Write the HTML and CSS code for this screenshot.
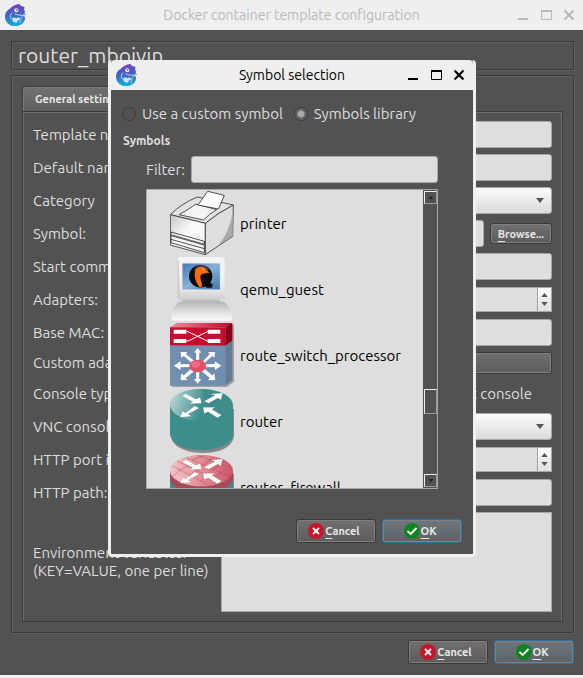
FILE: index.html
```html
<!DOCTYPE html>
<html lang="en">
<head>
<meta charset="utf-8">
<title>Docker container template configuration</title>
<link rel="stylesheet" href="styles.css">
</head>
<body>
<svg class="defs" aria-hidden="true">
  <defs>
    <linearGradient id="g-logo" x1="0" y1="0" x2="0" y2="1"><stop offset="0" stop-color="#7b3fbb"/><stop offset=".5" stop-color="#3f66bd"/><stop offset="1" stop-color="#12b0da"/></linearGradient>
    <linearGradient id="g-front" x1="0" y1="0" x2="1" y2="1"><stop offset="0" stop-color="#c6c6c6"/><stop offset=".45" stop-color="#fafafa"/><stop offset="1" stop-color="#eee"/></linearGradient>
    <linearGradient id="g-mon" x1="0" y1="0" x2="0" y2="1"><stop offset="0" stop-color="#f4f4f4"/><stop offset=".6" stop-color="#f0f0f0"/><stop offset="1" stop-color="#cfcfcf"/></linearGradient>
    <linearGradient id="g-base" x1="0" y1="0" x2="0" y2="1"><stop offset="0" stop-color="#b4b4b4"/><stop offset=".7" stop-color="#eaeaea"/><stop offset="1" stop-color="#f6f6f6"/></linearGradient>
    <linearGradient id="g-screen" x1="0" y1="0" x2="1" y2="1"><stop offset="0" stop-color="#3f77b0"/><stop offset=".5" stop-color="#87b0d8"/><stop offset="1" stop-color="#3c73ab"/></linearGradient>
    <linearGradient id="g-red" x1="0" y1="0" x2="1" y2="0"><stop offset="0" stop-color="#f08a9c"/><stop offset="1" stop-color="#b40a2a"/></linearGradient>
    <linearGradient id="g-teal" x1="0" y1="0" x2=".9" y2=".3"><stop offset="0" stop-color="#c4dedd"/><stop offset="1" stop-color="#3c8d8c"/></linearGradient>
    <linearGradient id="g-brick" x1="0" y1="0" x2="1" y2="0"><stop offset="0" stop-color="#f6c3c9"/><stop offset="1" stop-color="#cf5564"/></linearGradient>
    <symbol id="logo" viewBox="0 0 63 66">
      <path fill="url(#g-logo)" d="M23 7C29 3 36 0 43 0C45 5 52 8 59 9C56 14 58 19 60 24L58 29L63 30V33L50 35L60 38C62 52 51 66 30 66C12 66 0 54 0 38C0 27 5 20 12 16C17 13 18 10 23 7Z"/>
      <circle cx="34" cy="19" r="6" fill="#efefef"/><circle cx="35" cy="18" r="2.500" fill="#54309a"/>
      <path fill="none" stroke="#dfe9f6" stroke-width="2.500" d="M62 32C50 35 36 34 29 29M22 26C13 33 15 43 22 47"/>
      <path fill="#c5e5f3" d="M22 46C21 38 30 41 34 43C41 38 48 42 45 47C36 47 39 55 34 56C26 57 21 52 22 46Z"/>
      <path fill="none" stroke="#c5e5f3" stroke-width="2.500" d="M51 38C49 45 44 50 45 57"/>
    </symbol>
    <symbol id="arrows" viewBox="0 0 192 100">
      <g fill="#fff" stroke="#333" stroke-opacity=".35" stroke-width="1">
        <path d="M36 21L48 14L78 31L90 25L95 43L58 44L68 38Z"/>
        <path d="M102 37L135 19L120 15L158 12L153 33L144 27L116 43Z"/>
        <path d="M74 51L88 57L54 76L66 82L30 85L38 66L46 72Z"/>
        <path d="M155 79L142 86L114 68L103 74L99 55L137 55L126 61Z"/>
      </g>
    </symbol>
    <symbol id="printer" viewBox="0 0 192 192">
      <g stroke="#333" stroke-width="2.5" stroke-linejoin="round">
        <path fill="#e2e2e2" d="M1 71Q35 37 82 18L190 42Q145 65 106 97Z"/>
        <path fill="url(#g-front)" d="M1 71L106 97V191L1 162Z"/>
        <path fill="#dedede" d="M106 97Q145 65 190 42L188 136L106 191Z"/>
        <path fill="#f4f4f4" d="M27 71Q58 54 78 39L140 56Q115 70 101 87Z"/>
        <path fill="#fff" d="M113 1L163 13L145 54L84 42Z"/>
        <path fill="none" d="M3 123L103 151V160M3 133L103 161M3 145L103 173M3 123V155L103 185V151"/>
      </g>
      <path fill="#aaa" d="M188 62V134L145 163Q180 120 188 62Z"/>
      <path fill="none" stroke="#666" stroke-width="5" d="M8 134L103 161"/>
    </symbol>
    <symbol id="qemu" viewBox="0 0 192 192">
      <path fill="#bdbdbd" d="M36 120H150V140H36Z"/>
      <rect x="22" y="0" width="142" height="128" rx="9" fill="url(#g-mon)"/>
      <path fill="#ccc" d="M22 9H26L29 118L40 127H28Q22 125 22 117Z"/>
      <rect x="36" y="18" width="115" height="81" fill="url(#g-screen)" stroke="#eee" stroke-width="3"/>
      <ellipse cx="92" cy="58" rx="35" ry="34" fill="#080b0c"/><path fill="#080b0c" d="M98 70L128 81L126 92H109Z"/>
      <ellipse cx="94" cy="39" rx="22" ry="14" fill="#777" opacity=".55"/>
      <path fill="#ff6d0b" d="M86 88Q76 74 74 58Q72 36 89 30Q104 27 110 41L119 47L104 48Q91 50 91 60Q91 70 96 78L95 91Q89 92 86 88Z"/><circle cx="99" cy="37" r="2" fill="#fff"/>
      <path fill="url(#g-base)" d="M26 134H162Q179 145 187 177Q190 191 179 191H13Q1 191 4 177Q13 145 26 134Z"/>
    </symbol>
    <symbol id="rsp" viewBox="0 0 192 192">
      <path fill="#888" opacity=".7" d="M4 187L8 192H171L192 176V7L187 4Z"/>
      <path fill="url(#g-red)" d="M0 13L20 0H187L166 13Z"/><path fill="#c70a30" d="M0 13H166V68H0Z"/><path fill="#8a0019" d="M166 13L187 0V54L166 68Z"/>
      <path fill="#718fae" d="M0 68H166V188H0Z"/><path fill="#637d96" d="M166 68L187 54V172L166 188Z"/>
      <path fill="none" stroke="#fff" stroke-width="3" d="M49 26H54L112 54H124M49 54H54L112 26H124"/>
      <path fill="#fff" d="M11 20H49V32H11ZM113 20H151V32H113ZM11 48H49V60H11ZM113 48H151V60H113Z"/>
      <g fill="#fff" stroke="#34485d" stroke-opacity=".5">
        <path d="M78 128V89H71L83 74L95 89H88V128Z"/>
        <path d="M78 128V168H71L83 183L95 168H88V128Z"/>
        <path d="M83 123H32V114L11 128L32 142V133H83ZM83 123H134V114L155 128L134 142V133H83Z"/>
        <path d="M79 132L41 99L34 106L31 87H53L48 93L88 125ZM88 125L119 93L113 87H136L134 106L127 99L91 132ZM87 123L127 157L134 150L136 172H113L119 165L79 132ZM79 124L41 157L34 150L31 172H53L48 165L88 132Z"/>
      </g>
      <ellipse cx="83" cy="129" rx="25" ry="19" fill="#e64c65"/><ellipse cx="77" cy="124" rx="15" ry="10" fill="#f18a9a" opacity=".5"/>
    </symbol>
    <symbol id="router" viewBox="0 0 192 192">
      <path fill="#888" d="M7 60H192V142C186 180 140 192 102 192C54 192 20 178 7 156Z"/>
      <path fill="#3c8d8c" d="M0 49H189V136C184 170 140 183 95 183C44 183 5 168 0 136Z"/>
      <ellipse cx="94.500" cy="49" rx="94.500" ry="49" fill="#3c8d8c"/>
      <path fill="url(#g-teal)" d="M0 49C3 14 49 0 94 0L120 98C54 102 4 80 0 49Z"/>
      <use href="#arrows" width="192" height="100"/>
    </symbol>
    <symbol id="firewall" viewBox="0 0 192 192">
      <path fill="#888" d="M7 56H192V160H7Z"/>
      <path fill="#3c8d8c" d="M0 60H189V192H0Z"/>
      <path fill="#a34a58" d="M0 47H189V72C178 106 138 116 95 116C48 116 8 104 0 72Z"/>
      <ellipse cx="94.500" cy="47" rx="94.500" ry="47" fill="url(#g-brick)"/>
      <path fill="none" stroke="#a64f5c" stroke-width="2" opacity=".75" d="M6 32L120 93M22 18L153 82M48 7L180 65M84 1L187 40M30 45L70 24M58 60L96 38M92 77L130 54M126 70L165 45M65 16L98 2M98 30L133 8M130 41L164 20M7 65L30 45M46 83L65 64"/>
      <use href="#arrows" width="192" height="100"/>
    </symbol>
    <symbol id="no" viewBox="0 0 16 16"><circle cx="8" cy="8" r="8" fill="#c7162b"/><path d="M5 5L11 11M11 5L5 11" stroke="#fff" stroke-width="1.800"/></symbol>
    <symbol id="yes" viewBox="0 0 16 16"><circle cx="8" cy="8" r="8" fill="#0e8420"/><path d="M3.500 8L6.700 11L12.500 5" fill="none" stroke="#fff" stroke-width="1.800"/></symbol>
    <symbol id="min" viewBox="0 0 12 12"><path d="M1 10H11" stroke="currentColor" stroke-width="2"/></symbol>
    <symbol id="max" viewBox="0 0 12 12"><path d="M1.500 2V10.500H11.500V2" fill="none" stroke="currentColor"/><path d="M1 2H12" stroke="currentColor" stroke-width="2"/></symbol>
    <symbol id="close" viewBox="0 0 12 12"><path d="M1.500 1.500L10.500 10.500M10.500 1.500L1.500 10.500" stroke="currentColor" stroke-width="2.200"/></symbol>
    <symbol id="up" viewBox="0 0 8 5"><path d="M0 5L4 0L8 5Z" fill="currentColor"/></symbol>
    <symbol id="down" viewBox="0 0 8 5"><path d="M0 0H8L4 5Z" fill="currentColor"/></symbol>
  </defs>
</svg>

<div class="window">
  <header class="titlebar inactive">
    <svg class="logo"><use href="#logo"/></svg>
    <h1>Docker container template configuration</h1>
    <div class="controls">
      <button aria-label="Minimize"><svg><use href="#min"/></svg></button>
      <button aria-label="Maximize"><svg><use href="#max"/></svg></button>
      <button aria-label="Close"><svg><use href="#close"/></svg></button>
    </div>
  </header>

  <main class="content">
    <div class="name frame">router_mboivin</div>
    <div class="outer frame">
      <div class="tabs"><button class="tab">General settings</button></div>
      <form class="pane">
        <label for="tname">Template name:</label><input id="tname" class="field">
        <label for="dname">Default name format:</label><input id="dname" class="field">
        <label for="cat">Category</label>
        <div class="combo"><select id="cat" class="field"></select><svg class="caret"><use href="#down"/></svg></div>
        <label for="sym">Symbol:</label>
        <div class="browse-row"><input id="sym" class="field"><button type="button" class="button browse"><span><u>B</u>rowse...</span></button></div>
        <label for="cmd">Start command:</label><input id="cmd" class="field">
        <label for="adapters">Adapters:</label>
        <div class="spin"><input id="adapters"><span class="steps"><svg><use href="#up"/></svg><svg><use href="#down"/></svg></span></div>
        <label for="mac">Base MAC:</label><input id="mac" class="field">
        <label for="custom">Custom adapters:</label><button id="custom" type="button" class="button wide" aria-label="Configure custom adapters"></button>
        <label for="console">Console type:</label>
        <div class="console-row"><select id="console" class="field"></select><label><input type="checkbox">Auto start console</label></div>
        <label for="vnc">VNC console resolution:</label>
        <div class="combo"><select id="vnc" class="field"></select><svg class="caret"><use href="#down"/></svg></div>
        <label for="port">HTTP port in the container:</label>
        <div class="spin"><input id="port"><span class="steps"><svg><use href="#up"/></svg><svg><use href="#down"/></svg></span></div>
        <label for="path">HTTP path:</label><input id="path" class="field">
        <label for="env">Environment variables:<br>(KEY=VALUE, one per line)</label><textarea id="env"></textarea>
      </form>
    </div>
    <div class="actions">
      <button class="button"><svg><use href="#no"/></svg><span><u>C</u>ancel</span></button>
      <button class="button primary"><svg><use href="#yes"/></svg><span><u>O</u>K</span></button>
    </div>
  </main>

  <section class="dialog" role="dialog" aria-labelledby="dialog-title">
    <header class="titlebar">
      <svg class="logo"><use href="#logo"/></svg>
      <h2 id="dialog-title">Symbol selection</h2>
      <div class="controls">
        <button aria-label="Minimize"><svg><use href="#min"/></svg></button>
        <button aria-label="Maximize"><svg><use href="#max"/></svg></button>
        <button aria-label="Close"><svg><use href="#close"/></svg></button>
      </div>
    </header>
    <div class="dialog-body">
      <div class="radios">
        <label><input type="radio" name="source">Use a custom symbol</label>
        <label><input type="radio" name="source" checked>Symbols library</label>
      </div>
      <h3>Symbols</h3>
      <div class="library">
        <div class="filter"><label for="filter">Filter:</label><input id="filter" class="field"></div>
        <div class="listbox">
          <ul>
            <li><svg><use href="#printer"/></svg>printer</li>
            <li><svg><use href="#qemu"/></svg>qemu_guest</li>
            <li><svg><use href="#rsp"/></svg>route_switch_processor</li>
            <li><svg><use href="#router"/></svg>router</li>
            <li><svg><use href="#firewall"/></svg>router_firewall</li>
          </ul>
          <div class="scrollbar">
            <span class="arrow"><svg><use href="#up"/></svg></span>
            <span class="before"></span><span class="thumb"></span><span class="after"></span>
            <span class="arrow"><svg><use href="#down"/></svg></span>
          </div>
        </div>
      </div>
      <div class="actions">
        <button class="button"><svg><use href="#no"/></svg><span><u>C</u>ancel</span></button>
        <button class="button primary"><svg><use href="#yes"/></svg><span><u>O</u>K</span></button>
      </div>
    </div>
  </section>
</div>
</body>
</html>
```
FILE: styles.css
```css
* { box-sizing: border-box; }
body {
  margin: 0;
  background: #525252;
  color: #dedede;
  font: 15px/18px Ubuntu, "Noto Sans", sans-serif;
}
button, input, select, textarea { font: inherit; margin: 0; }
svg { display: block; flex: none; }
.defs { position: absolute; width: 0; height: 0; }
.window { position: relative; border-bottom: 3px solid #efefef; }

.titlebar {
  display: grid;
  grid-template-columns: 59px 1fr 59px;
  align-items: center;
  height: 30px;
  padding: 0 8px 0 5px;
  background: #efefef;
  color: #000;
}
.titlebar.inactive { color: #b9b9b9; }
.titlebar h1, .titlebar h2 { margin: 0; font-size: 14px; font-weight: 400; text-align: center; white-space: nowrap; }
.titlebar h1, .titlebar h2 { padding-left: 3px; }
.logo { width: 21px; height: 22px; }
.controls { display: flex; gap: 11px; justify-content: flex-end; }
.controls button { padding: 0; border: 0; background: none; color: inherit; }
.controls svg { width: 12px; height: 12px; }

.content { padding: 11px 9px 11px 11px; }
.frame { border: 1px solid #3a3a3a; box-shadow: inset 1px 1px #5e5e5e, 1px 1px #5e5e5e; }
.name { height: 29px; padding: 0 6px; font-size: 21px; line-height: 27px; }
.outer { margin-top: 5px; padding: 10px; }
.tabs { display: flex; }
.tab {
  height: 25px;
  padding: 0 12px;
  border: 1px solid #3a3a3a;
  border-bottom: 0;
  border-radius: 3px 3px 0 0;
  box-shadow: inset 1px 1px #7c7c7c;
  background: linear-gradient(#717171, #5f5f5f);
  color: #e8e8e8;
  font-size: 11px;
  font-weight: 700;
}
.pane {
  display: grid;
  grid-template-columns: 176px 1fr;
  grid-template-rows: repeat(7, 27px) 22px;
  grid-auto-rows: minmax(27px, auto);
  gap: 6px 12px;
  align-items: center;
  padding: 9px 10px;
  border: 1px solid #3a3a3a;
  box-shadow: inset 1px 0 #707070, inset -1px 0 #707070, inset 0 1px #707070;
  white-space: nowrap;
}
.field {
  width: 100%;
  min-width: 0;
  height: 27px;
  padding: 0 6px;
  border: 1px solid #a8a8a8;
  border-radius: 3px;
  background: #dedede;
  color: #000;
}
.combo { position: relative; }
.combo .field, .console-row .field { appearance: none; display: block; background: linear-gradient(#fbfbfb, #dadada); }
.caret { position: absolute; right: 8px; top: 11px; width: 8px; height: 5px; color: #555; pointer-events: none; }
.browse-row { display: flex; align-items: center; gap: 6px; }
.spin {
  display: flex;
  height: 25px;
  border: 1px solid #a8a8a8;
  background: #dedede;
}
.spin input { flex: 1; min-width: 0; border: 0; background: none; }
.steps {
  display: flex;
  flex-direction: column;
  align-items: center;
  justify-content: space-evenly;
  width: 14px;
  border-left: 1px solid #a0a0a0;
  background: linear-gradient(#fbfbfb, #e2e2e2);
  color: #555;
}
.steps svg { width: 7px; height: 4px; }
.console-row { display: flex; align-items: center; justify-content: space-between; padding-right: 20px; gap: 6px; }
.console-row label { display: flex; align-items: center; gap: 6px; }
.console-row input { width: 14px; height: 14px; }
textarea { display: block; width: 100%; height: 100px; border: 1px solid #a8a8a8; background: #dedede; resize: none; }

.button {
  display: flex;
  align-items: center;
  justify-content: center;
  gap: 1px;
  width: 80px;
  height: 24px;
  padding: 0 4px 0 0;
  border: 1px solid #3a3a3a;
  border-radius: 3px;
  box-shadow: inset 0 0 0 1px #808080;
  background: linear-gradient(#707070, #5c5c5c);
  color: #e8e8e8;
  font-size: 11px;
  font-weight: 700;
}
.button u { text-underline-offset: 3px; text-decoration-thickness: 1px; }
.button svg { width: 16px; height: 16px; }
.button.primary { border-color: #2773a5; background: linear-gradient(#6f777c, #5b6369); }
.button.browse { flex: none; width: 62px; height: 21px; padding: 0; }
.button.wide { width: 100%; height: 22px; }
.actions { display: flex; justify-content: flex-end; gap: 6px; }
.content > .actions { margin-top: 7px; }

.dialog {
  position: absolute;
  left: 108px;
  top: 60px;
  width: 368px;
  border: 3px solid #efefef;
  border-top: 0;
  border-radius: 4px;
  background: #525252;
}
.dialog .titlebar { border-radius: 4px 4px 0 0; }
.dialog-body { padding: 14px 11px 11px 11px; }
.radios { display: flex; gap: 11px; height: 20px; }
.radios label { display: flex; align-items: center; gap: 6px; white-space: nowrap; }
.radios input {
  appearance: none;
  width: 14px;
  height: 14px;
  border: 1px solid #3a3a3a;
  border-radius: 50%;
}
.radios input:checked { background: radial-gradient(circle, #aaa 0 3px, #626262 4px); }
h3 { margin: 8px 1px 6px; font-size: 12px; line-height: 18px; font-weight: 700; }
.library { padding: 0 24px; }
.filter { display: flex; align-items: center; gap: 6px; }
.filter label { flex: none; }
.listbox { display: flex; height: 300px; margin-top: 6px; border: 1px solid #a8a8a8; background: #dedede; }
.listbox ul { flex: 1; margin: 0; padding: 1px 0 0 23px; list-style: none; overflow: hidden; }
.listbox li { display: flex; align-items: center; gap: 6px; height: 66px; color: #000; white-space: nowrap; }
.listbox li svg { align-self: flex-start; width: 64px; height: 64px; }
.scrollbar { display: flex; flex-direction: column; width: 14px; padding: 1px 0 1px 1px; background: #525252; }
.arrow, .thumb { border: 1px solid; border-color: #efefef #999 #999 #efefef; }
.arrow { display: grid; place-items: center; height: 13px; color: #222; }
.arrow svg { width: 6px; height: 3px; }
.before { flex: 185; }
.thumb { height: 25px; }
.after { flex: 60; }
.dialog .actions { margin-top: 30px; }
```
